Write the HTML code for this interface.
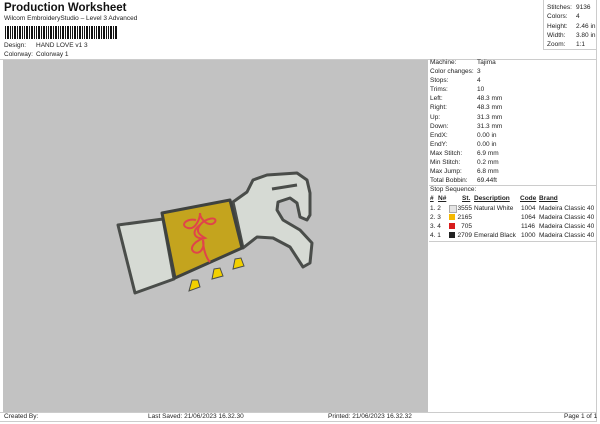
<!DOCTYPE html>
<html><head><style>
body{margin:0;width:600px;height:424px;background:#fff;font-family:"Liberation Sans",sans-serif;color:#222;position:relative;overflow:hidden}
.a{position:absolute;white-space:nowrap;font-size:6.5px;line-height:8px}
</style></head><body>
<div class="a" style="left:4px;top:2px;font-size:11.5px;line-height:13px;font-weight:bold;color:#111">Production Worksheet</div>
<div class="a" style="left:4px;top:15px">Wilcom EmbroideryStudio – Level 3 Advanced</div>
<svg class="a" style="left:5px;top:26px" width="112" height="13">
<g fill="#111">
<rect x="0" y="0" width="1" height="13"/><rect x="2" y="0" width="2" height="13"/><rect x="5" y="0" width="1" height="13"/><rect x="7" y="0" width="1" height="13"/><rect x="9" y="0" width="2" height="13"/><rect x="12" y="0" width="1" height="13"/><rect x="14" y="0" width="2" height="13"/><rect x="17" y="0" width="1" height="13"/><rect x="19" y="0" width="1" height="13"/><rect x="21" y="0" width="2" height="13"/><rect x="24" y="0" width="1" height="13"/><rect x="26" y="0" width="2" height="13"/><rect x="29" y="0" width="1" height="13"/><rect x="31" y="0" width="1" height="13"/><rect x="33" y="0" width="2" height="13"/><rect x="36" y="0" width="1" height="13"/><rect x="38" y="0" width="2" height="13"/><rect x="41" y="0" width="1" height="13"/><rect x="43" y="0" width="1" height="13"/><rect x="45" y="0" width="2" height="13"/><rect x="48" y="0" width="1" height="13"/><rect x="50" y="0" width="2" height="13"/><rect x="53" y="0" width="1" height="13"/><rect x="55" y="0" width="1" height="13"/><rect x="57" y="0" width="2" height="13"/><rect x="60" y="0" width="1" height="13"/><rect x="62" y="0" width="2" height="13"/><rect x="65" y="0" width="1" height="13"/><rect x="67" y="0" width="1" height="13"/><rect x="69" y="0" width="2" height="13"/><rect x="72" y="0" width="1" height="13"/><rect x="74" y="0" width="2" height="13"/><rect x="77" y="0" width="1" height="13"/><rect x="79" y="0" width="1" height="13"/><rect x="81" y="0" width="2" height="13"/><rect x="84" y="0" width="1" height="13"/><rect x="86" y="0" width="2" height="13"/><rect x="89" y="0" width="1" height="13"/><rect x="91" y="0" width="1" height="13"/><rect x="93" y="0" width="2" height="13"/><rect x="96" y="0" width="1" height="13"/><rect x="98" y="0" width="2" height="13"/><rect x="101" y="0" width="1" height="13"/><rect x="103" y="0" width="1" height="13"/><rect x="105" y="0" width="2" height="13"/><rect x="108" y="0" width="1" height="13"/><rect x="110" y="0" width="2" height="13"/>
</g></svg>
<div class="a" style="left:4px;top:42px">Design:</div><div class="a" style="left:36px;top:42px">HAND LOVE v1 3</div>
<div class="a" style="left:4px;top:51px">Colorway:</div><div class="a" style="left:36px;top:51px">Colorway 1</div>

<div style="position:absolute;left:0;top:0;width:597px;height:422px;border:1px solid #ccc;border-top:none;border-left:none;box-sizing:border-box"></div>
<div style="position:absolute;left:543px;top:0;width:54px;height:50px;border-left:1px solid #ccc;border-bottom:1px solid #ccc;box-sizing:border-box"></div>
<div class="a" style="left:547px;top:3px;line-height:9.3px">Stitches:<br>Colors:<br>Height:<br>Width:<br>Zoom:</div>
<div class="a" style="left:576px;top:3px;line-height:9.3px">9136<br>4<br>2.46 in<br>3.80 in<br>1:1</div>

<div style="position:absolute;left:3px;top:60px;width:422px;height:352px;background:#c2c2c2"></div>
<div style="position:absolute;left:0;top:59px;width:597px;height:1px;background:#ccc"></div>
<div style="position:absolute;left:0;top:412px;width:597px;height:1px;background:#ccc"></div>
<div style="position:absolute;left:425px;top:60px;width:3px;height:352px;background:#c2c2c2"></div>

<div class="a" style="left:430px;top:58px;line-height:9.1px">Machine:<br>Color changes:<br>Stops:<br>Trims:<br>Left:<br>Right:<br>Up:<br>Down:<br>EndX:<br>EndY:<br>Max Stitch:<br>Min Stitch:<br>Max Jump:<br>Total Bobbin:</div>
<div class="a" style="left:477px;top:58px;line-height:9.1px">Tajima<br>3<br>4<br>10<br>48.3 mm<br>48.3 mm<br>31.3 mm<br>31.3 mm<br>0.00 in<br>0.00 in<br>6.9 mm<br>0.2 mm<br>6.8 mm<br>69.44ft</div>
<div style="position:absolute;left:429px;top:185px;width:168px;height:1px;background:#ccc"></div>
<div class="a" style="left:430px;top:186px">Stop Sequence:</div>
<div class="a" style="left:430px;top:195px;font-weight:bold;text-decoration:underline">#</div>
<div class="a" style="left:438px;top:195px;font-weight:bold;text-decoration:underline">N#</div>
<div class="a" style="left:462px;top:195px;font-weight:bold;text-decoration:underline">St.</div>
<div class="a" style="left:474px;top:195px;font-weight:bold;text-decoration:underline">Description</div>
<div class="a" style="left:520px;top:195px;font-weight:bold;text-decoration:underline">Code</div>
<div class="a" style="left:539px;top:195px;font-weight:bold;text-decoration:underline">Brand</div>
<div class="a" style="left:430px;top:204px;line-height:9px">1. 2<br>2. 3<br>3. 4<br>4. 1</div>
<div style="position:absolute;left:449px;top:205px;width:6px;height:6px;background:#e4e4e4;border:0.5px solid #aaa"></div>
<div style="position:absolute;left:449px;top:214px;width:6px;height:6px;background:#f4b800"></div>
<div style="position:absolute;left:449px;top:223px;width:6px;height:6px;background:#d81c1c"></div>
<div style="position:absolute;left:449px;top:232px;width:6px;height:6px;background:#222"></div>
<div class="a" style="left:455px;top:204px;line-height:9px;text-align:right;width:17px">3555<br>2165<br>705<br>2709</div>
<div class="a" style="left:474px;top:204px;line-height:9px">Natural White<br><br><br>Emerald Black</div>
<div class="a" style="left:521px;top:204px;line-height:9px">1004<br>1064<br>1146<br>1000</div>
<div class="a" style="left:539px;top:204px;line-height:9px">Madeira Classic 40<br>Madeira Classic 40<br>Madeira Classic 40<br>Madeira Classic 40</div>
<div style="position:absolute;left:429px;top:241px;width:168px;height:1px;background:#ccc"></div>

<svg style="position:absolute;left:0;top:0" width="600" height="424">
<g stroke="#4a4d4a" stroke-width="3" stroke-linejoin="round" fill="#d6dad4">
<path d="M233,202 L247,192 L253,180 L267,175 L297,173 L307,180 L310,193 L310,215 L307,220 L300,217 L297,203 L290,198 L278,202 L277,210 L283,220 L300,230 L312,243 L310,263 L303,267 L290,247 L273,238 L257,237 L243,248 Z"/>
<path d="M118,225 L163,219 L174,279 L135,293 Z"/>
</g>
<path d="M272,189 L297,185" stroke="#4a4d4a" stroke-width="3" fill="none"/>
<g fill="#f2d000" stroke="#4a4d4a" stroke-width="1">
<path d="M192,280 L198,280 L200,287 L189,291 Z"/>
<path d="M214,269 L220,268 L223,276 L212,279 Z"/>
<path d="M235,259 L241,258 L244,266 L233,269 Z"/>
</g>
<path d="M162,213 L230,200 L242,248 L175,278 Z" fill="#c4a41e" stroke="#3f423f" stroke-width="3" stroke-linejoin="round"/>
<g fill="none" stroke="#e0444a" stroke-width="2">
<path d="M196,220 C185,218 180,226 188,228 C196,230 200,218 200,213 C200,220 210,228 215,222 C218,216 205,218 200,225 C195,232 200,235 205,238 C196,240 188,248 194,252 C200,255 205,248 203,240 C203,248 206,258 210,262"/>
<path d="M200,225 C190,232 195,240 205,238"/>
</g>
</svg>

<div class="a" style="left:4px;top:413px">Created By:</div>
<div class="a" style="left:148px;top:413px">Last Saved: 21/06/2023 16.32.30</div>
<div class="a" style="left:328px;top:413px">Printed: 21/06/2023 16.32.32</div>
<div class="a" style="left:564px;top:413px">Page 1 of 1</div>
</body></html>
